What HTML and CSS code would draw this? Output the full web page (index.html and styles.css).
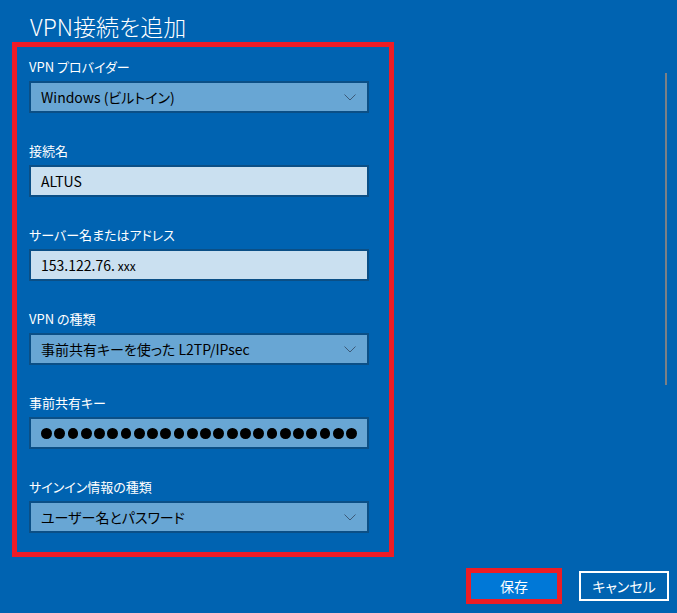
FILE: index.html
```html
<!DOCTYPE html>
<html lang="ja">
<head>
  <meta charset="UTF-8" />
  <meta name="viewport" content="width=device-width, initial-scale=1.0" />
  <title>VPN接続を追加</title>
  <link rel="stylesheet" href="styles.css">
</head>
<body>
  <div class="page">
    <h1 class="title">VPN接続を追加</h1>

    <div class="highlight">
      <div class="field">
        <label>VPN プロバイダー</label>
        <div class="select">
          <span>Windows (ビルトイン)</span>
          <svg class="chevron" width="12" height="7" viewBox="0 0 12 7"><polyline points="0.5,0.5 6,6 11.5,0.5" /></svg>
        </div>
      </div>

      <div class="field">
        <label>接続名</label>
        <div class="textbox">ALTUS</div>
      </div>

      <div class="field">
        <label>サーバー名またはアドレス</label>
        <div class="textbox">153.122.76. <span class="mask">xxx</span></div>
      </div>

      <div class="field">
        <label>VPN の種類</label>
        <div class="select">
          <span>事前共有キーを使った L2TP/IPsec</span>
          <svg class="chevron" width="12" height="7" viewBox="0 0 12 7"><polyline points="0.5,0.5 6,6 11.5,0.5" /></svg>
        </div>
      </div>

      <div class="field">
        <label>事前共有キー</label>
        <div class="select password">
          <i></i><i></i><i></i><i></i><i></i><i></i><i></i><i></i>
          <i></i><i></i><i></i><i></i><i></i><i></i><i></i><i></i>
          <i></i><i></i><i></i><i></i><i></i><i></i><i></i><i></i>
        </div>
      </div>

      <div class="field">
        <label>サインイン情報の種類</label>
        <div class="select">
          <span>ユーザー名とパスワード</span>
          <svg class="chevron" width="12" height="7" viewBox="0 0 12 7"><polyline points="0.5,0.5 6,6 11.5,0.5" /></svg>
        </div>
      </div>
    </div>

    <div class="actions">
      <button class="btn save">保存</button>
      <button class="btn cancel">キャンセル</button>
    </div>

    <div class="scrollbar"></div>
  </div>
</body>
</html>
```

FILE: styles.css
```css
body {
  margin: 0;
  background-color: #0063b1;
  font-family: "Noto Sans CJK JP", "Noto Sans", sans-serif;
  font-feature-settings: "palt";
  color: #fff;
}

.page {
  position: relative;
  width: 677px;
  height: 613px;
  overflow: hidden;
}

.title {
  margin: 0;
  padding: 10px 0 0 30px;
  height: 32px;
  font-size: 23px;
  font-weight: 300;
  line-height: 32px;
}

.highlight {
  box-sizing: border-box;
  width: 382px;
  height: 515px;
  margin-left: 12px;
  border: 5px solid #ee1c25;
  padding: 10px 20px 0 12px;
}

.field {
  margin-bottom: 28px;
}

.field label {
  display: block;
  font-size: 13px;
  line-height: 20px;
  margin-bottom: 4px;
}

.select,
.textbox {
  box-sizing: border-box;
  width: 340px;
  height: 32px;
  border: 2px solid #0b4f86;
  padding: 0 10px;
  display: flex;
  align-items: center;
  font-size: 14px;
  color: #000;
}

.select {
  background-color: #68a6d4;
  justify-content: space-between;
}

.textbox {
  background-color: #cae0f0;
}

.mask {
  font-size: 12px;
  margin-left: 3px;
}

.chevron {
  margin-right: 1px;
  fill: none;
  stroke: #3d5a78;
  stroke-width: 1;
}

.password {
  justify-content: flex-start;
  gap: 2.45px;
}

.password i {
  display: block;
  width: 11px;
  height: 11px;
  border-radius: 50%;
  background-color: #000;
}

.actions {
  display: flex;
  justify-content: flex-end;
  align-items: center;
  gap: 17px;
  margin-top: 11px;
  padding-right: 8px;
}

.btn {
  box-sizing: border-box;
  font-family: inherit;
  font-feature-settings: "palt";
  font-size: 14px;
  color: #fff;
  cursor: pointer;
  padding: 0;
}

.save {
  width: 96px;
  height: 36px;
  background-color: #0078d7;
  border: 5px solid #ee1c25;
}

.cancel {
  width: 90px;
  height: 30px;
  background-color: transparent;
  border: 2px solid #fff;
}

.scrollbar {
  position: absolute;
  left: 665px;
  top: 73px;
  width: 2px;
  height: 312px;
  background-color: #7c8085;
}
```
